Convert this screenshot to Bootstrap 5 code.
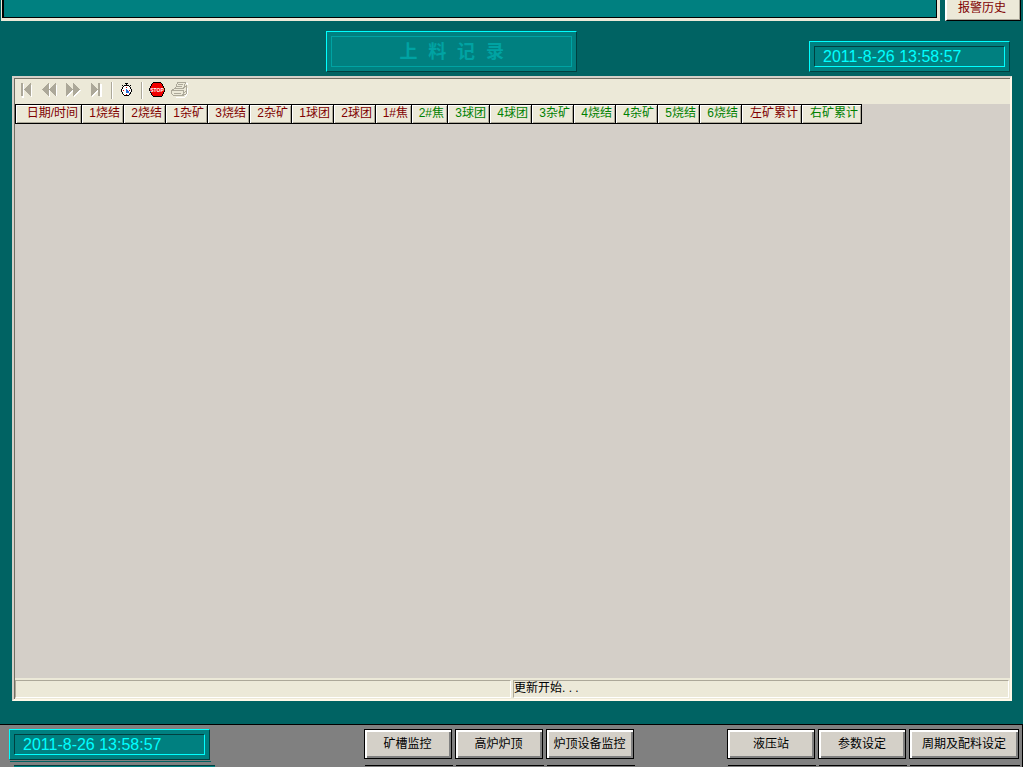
<!DOCTYPE html>
<html lang="zh-CN">
<head>
<meta charset="utf-8">
<meta name="viewport" content="width=device-width, initial-scale=1">
<title>上料记录</title>
<link href="https://cdn.jsdelivr.net/npm/bootstrap@5.3.0/dist/css/bootstrap.min.css" rel="stylesheet">
<script src="https://cdn.jsdelivr.net/npm/bootstrap@5.3.0/dist/js/bootstrap.bundle.min.js" defer></script>
<style>
body{background:#006363;color:#000;font:12px/16px "Liberation Sans","Noto Sans CJK SC",sans-serif}
.page{height:100vh;min-height:400px}
.maroon{color:#800000}
.green{color:#008000}
/* alarm strip */
.strip{height:21px;margin-left:1px;margin-right:5px;background:#008080;border:solid #ece9d8;border-width:0 3px 3px 1px;box-shadow:inset 2px 0 #000,inset -1px -1px #000}
.history{width:76px;height:21px;margin-right:2px;padding:0 3px 4px 0;background:#ece9d8;border:solid;border-width:0 1px 1px 2px;border-color:#fff #000 #000 #fff;box-shadow:inset -1px -1px #aca899}
/* title and clocks */
.heading{height:55px;padding:0 13px 4px 0}
.title{width:251px;height:41px;margin-left:32.3%;padding:4px;background:#008080;border:1px solid;border-color:#0ff #004040 #004040 #0ff}
.title h1{margin:0;border:1px solid #00a3a3;height:31px;color:#00a3a3;font:bold 18px/32px "Liberation Mono","Noto Sans CJK SC",monospace}
.clock{width:201px;height:31px;padding:4px;background:#008080;border:1px solid;border-color:#0ff #004040 #004040 #0ff}
.clock time{display:block;height:21px;padding-left:8px;border:1px solid;border-color:#004040 #0ff #0ff #004040;color:#0ff;font-size:16px;line-height:20px}
/* report window */
.report{margin:0 11px 0 12px;background:#d4cfc8;border:2px solid;border-color:#d4d0c8 #fff8e8 #fff8e8 #d4d0c8;box-shadow:inset 1px 1px #716f64}
.report-body{margin:1px 0 0 1px}
.tools{height:25px;background:#ece9d8;padding:1px 0 0 1px}
.tool{width:16px;height:18px;padding:0;margin:0 4px 0 3px;border:0;background:none;line-height:0}
.tool svg{display:block;overflow:visible}
.rule{width:1px;height:17px;margin:2px 3px 0;background:#aca899;box-shadow:1px 0 #fff}
.records{table-layout:fixed;width:847px;border-collapse:separate;border-spacing:0;border:solid #000;border-width:1px 0 1px 1px}
.records th{height:18px;padding:0 3px 2px 0;background:#ece9d8;border-right:1px solid #000;box-shadow:inset 1px 1px #fff,inset -1px -1px #aca899;font-weight:400;text-align:right;white-space:nowrap;line-height:16px}
.c-time{width:66px}.c-bin{width:42px}.c-coke{width:36px}.c-sum{width:60px}
.status{height:21px;background:#ece9d8;padding:2px 1px 0 0;gap:2px}
.pane{height:18px;border:1px solid;border-color:#aca899 #fff #fff #aca899;line-height:15px}
/* bottom navigation */
.bottom{height:43px;margin-top:23px;padding:4px 3px 0 9px;background:#808080;border-top:1px solid #000;border-right:1px solid #000;overflow:hidden}
.key{position:relative;width:88px;height:30px;padding:0;background:#d4d0c8;border:1px solid #000;box-shadow:inset 2px 2px #fff,inset -2px -2px #808080;white-space:nowrap}
.key:active{box-shadow:inset 2px 2px #808080}
.key.wide{width:110px}
.key::after{content:"";position:absolute;left:0;right:-2px;top:35px;height:1px;background:#000}
.keys{gap:3px}
.middle{margin-left:15.2%}
.bottom .clock{position:relative}
.bottom .clock::before{content:"";position:absolute;left:0;right:-2px;top:31px;height:1px;background:#006363}
.bottom .clock::after{content:"";position:absolute;left:4px;right:-6px;top:35px;height:2px;background:#008080;border-top:1px solid #004040}
</style>
</head>
<body>
<div class="page d-flex flex-column overflow-hidden">
  <div class="d-flex flex-shrink-0">
    <div class="strip flex-grow-1"></div>
    <button type="button" class="history maroon flex-shrink-0">报警历史</button>
  </div>
  <header class="heading d-flex align-items-end flex-shrink-0">
    <div class="title flex-shrink-0"><h1 class="text-center">上 料 记 录</h1></div>
    <div class="clock ms-auto flex-shrink-0"><time datetime="2011-08-26T13:58:57">2011-8-26 13:58:57</time></div>
  </header>
  <main class="report flex-grow-1 d-flex flex-column">
    <div class="report-body flex-grow-1 d-flex flex-column">
      <div class="tools d-flex flex-shrink-0">
        <button class="tool" type="button" disabled aria-label="第一条"><svg width="16" height="18" shape-rendering="crispEdges"><path fill="#fff" d="M3 4h2v14H3zM13 4v14l-7-7z"/><path fill="#aca899" d="M2 3h2v13H2zM12 3v13L5 9.500z"/></svg></button>
        <button class="tool" type="button" disabled aria-label="上一页"><svg width="16" height="18" shape-rendering="crispEdges"><path fill="#fff" d="M8 4v13l-7-6.500zM15 4v13l-6-6.500z"/><path fill="#aca899" d="M7 3v13L0 9.500zM14 3v13L7 9.500z"/></svg></button>
        <button class="tool" type="button" disabled aria-label="下一页"><svg width="16" height="18" shape-rendering="crispEdges"><path fill="#fff" d="M2 4v13l7-6.500zM9 4v13l7-6.500z"/><path fill="#aca899" d="M1 3v13l7-6.500zM8 3v13l7-6.500z"/></svg></button>
        <button class="tool" type="button" disabled aria-label="最后一条"><svg width="16" height="18" shape-rendering="crispEdges"><path fill="#fff" d="M4 4v13l7-6.500zM12 4h2v13h-2z"/><path fill="#aca899" d="M3 3v13l7-6.500zM10 3h2v13h-2z"/></svg></button>
        <span class="rule"></span>
        <button class="tool" type="button" aria-label="时间"><svg width="16" height="18" shape-rendering="crispEdges"><path fill="#fff" d="M6 6h5l2 3v4l-2 2H6l-2-2V8z"/><path fill="#000" d="M7 3h3v1H9v1h2v1H6V5h2V4H7zM5 6h1v1H5zM11 6h1v1h-1zM4 7h1v2H4zM12 7h1v2h-1zM3 9h1v3H3zM13 9h1v3h-1zM4 12h1v2H4zM12 12h1v2h-1zM5 14h1v1H5zM11 14h1v1h-1zM6 15h5v1H6zM12 5h1v1h-1zM4 5h1v1H4z"/><path fill="#2468d8" d="M8 9h1v1h1v1h1v2h1v1h-1v-1H8z"/><path fill="#e00000" d="M8 7h1v1H8zM5 10h1v1H5zM11 10h1v1h-1zM8 14h1v1H8z"/></svg></button>
        <span class="rule"></span>
        <button class="tool" type="button" aria-label="停止"><svg width="16" height="18" shape-rendering="crispEdges"><path fill="#000" d="M5 2h8v1h1v1h1v2h1v2h1v4h-1v2h-1v2h-1v1H5v-1H4v-1H3v-2H2v-2H1V8h1V6h1V4h1V3h1z"/><path fill="#f00000" d="M5 3h8v1h1v2h1v2h1v4h-1v2h-1v2H5v-1H4v-2H3v-2H2V8h1V6h1V4h1z"/><text x="9" y="12" text-anchor="middle" fill="#fff" font-family="Liberation Sans Narrow, Liberation Sans, sans-serif" font-size="5" font-weight="700">STOP</text></svg></button>
        <button class="tool" type="button" disabled aria-label="打印"><svg width="17" height="18" shape-rendering="crispEdges" fill="none" stroke-width="1"><path stroke="#fff" d="M6.500 9.500l2-6h8l-2 6M13.500 17.500h-9M16.500 7.500v6l-3 4"/><path fill="#ece9d8" stroke="#aca899" d="M4.500 8.500l2-6h8l-2 6zM3.500 8.500h9l3-3v5l-3 3v-3h-12zM.5 10.500h12v3l-1 2h-9l-2-2zM12.500 13.500l3-3v3l-3 2"/><path stroke="#aca899" d="M7 4.500h5M6 6.500h5M3 13.500h7"/></svg></button>
      </div>
      <div class="flex-grow-1 overflow-hidden">
        <table class="records">
          <colgroup><col class="c-time"><col class="c-bin" span="7"><col class="c-coke" span="2"><col class="c-bin" span="7"><col class="c-sum" span="2"></colgroup>
          <thead><tr class="maroon">
            <th scope="col">日期/时间</th><th scope="col">1烧结</th><th scope="col">2烧结</th><th scope="col">1杂矿</th><th scope="col">3烧结</th><th scope="col">2杂矿</th><th scope="col">1球团</th><th scope="col">2球团</th><th scope="col">1#焦</th><th scope="col" class="green">2#焦</th><th scope="col" class="green">3球团</th><th scope="col" class="green">4球团</th><th scope="col" class="green">3杂矿</th><th scope="col" class="green">4烧结</th><th scope="col" class="green">4杂矿</th><th scope="col" class="green">5烧结</th><th scope="col" class="green">6烧结</th><th scope="col">左矿累计</th><th scope="col" class="green">右矿累计</th>
          </tr></thead>
        </table>
      </div>
      <div class="status d-flex flex-shrink-0">
        <div class="pane w-50"></div>
        <div class="pane w-50">更新开始. . .</div>
      </div>
    </div>
  </main>
  <footer class="bottom d-flex flex-shrink-0">
    <div class="clock flex-shrink-0"><time datetime="2011-08-26T13:58:57">2011-8-26 13:58:57</time></div>
    <nav class="keys middle d-flex" aria-label="监控">
      <button type="button" class="key">矿槽监控</button>
      <button type="button" class="key">高炉炉顶</button>
      <button type="button" class="key">炉顶设备监控</button>
    </nav>
    <nav class="keys ms-auto d-flex" aria-label="设定">
      <button type="button" class="key">液压站</button>
      <button type="button" class="key">参数设定</button>
      <button type="button" class="key wide">周期及配料设定</button>
    </nav>
  </footer>
</div>
</body>
</html>
